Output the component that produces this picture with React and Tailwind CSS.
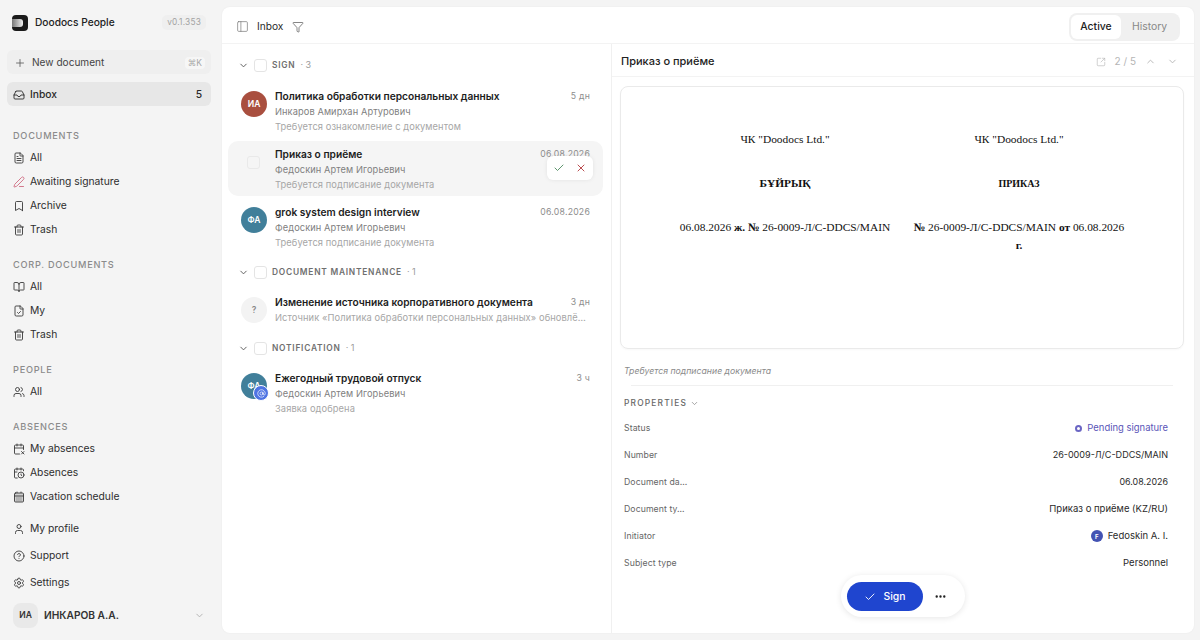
import {
  Plus, Inbox, FileText, PenLine, Bookmark, Trash2, BookOpen, FileCheck, Users, CalendarX2, CalendarClock,
  CalendarDays, User, CircleHelp, Settings, ChevronDown, ChevronUp, PanelLeft, Filter, SquareArrowOutUpRight,
  Check, X, Ellipsis, AtSign,
} from "lucide-react";

function NavItem({ icon: Icon, label, iconClass = "text-[#3a3a3a]" }) {
  return (
    <div className="flex h-6 items-center gap-[5px] pl-[13px] pt-[2px] text-[10.3px] text-[#2e2e2e]">
      <Icon size={12} strokeWidth={1.8} className={iconClass} />
      <span>{label}</span>
    </div>
  );
}

function NavSection({ title, children, className = "" }) {
  return (
    <div className={className}>
      <div className="mb-[2px] flex h-[16px] items-center pl-[13px] pt-[2px] text-[9.2px] font-medium tracking-[0.08em] text-[#8b8b8b]">
        {title}
      </div>
      {children}
    </div>
  );
}

function Sidebar() {
  return (
    <aside className="flex h-full w-[222px] shrink-0 flex-col">
      <div className="flex h-[44px] items-center pl-[12px] pr-[16px] pt-[1px]">
        <div className="relative h-4 w-4 overflow-hidden rounded-[4px] bg-[#1a1a1a]">
          <div className="absolute left-0 top-[4px] h-[8px] w-[11px] rounded-r-[3px] bg-gradient-to-r from-[#777] to-[#f2f2f2]" />
        </div>
        <span className="ml-[7px] text-[10.2px] font-medium text-[#222]">Doodocs People</span>
        <span className="ml-auto rounded-[5px] bg-[#efefef] px-[5px] py-[1px] text-[8.3px] tracking-wide text-[#a3a3a3]">v0.1.353</span>
      </div>
      <div className="ml-[7px] mr-[11px] mt-[6px] flex h-6 items-center rounded-md bg-[#efefef] pl-[7px] pr-[6px] pt-[2px] text-[10.1px] text-[#444]">
        <Plus size={12} strokeWidth={1.6} className="text-[#555]" />
        <span className="ml-[6px]">New document</span>
        <span className="ml-auto rounded bg-[#f6f6f6] px-[3px] text-[8.5px] text-[#a8a8a8]">⌘K</span>
      </div>
      <div className="ml-[7px] mr-[11px] mt-2 flex h-6 items-center rounded-md bg-[#e7e7e7] pl-[6px] pr-[9px] pt-[2px] text-[10.3px] font-medium text-[#2a2a2a]">
        <Inbox size={12} strokeWidth={1.8} />
        <span className="ml-[5px]">Inbox</span>
        <span className="ml-auto">5</span>
      </div>
      <NavSection title="DOCUMENTS" className="mt-[21px]">
        <NavItem icon={FileText} label="All" />
        <NavItem icon={PenLine} label="Awaiting signature" iconClass="text-[#cf6a80]" />
        <NavItem icon={Bookmark} label="Archive" />
        <NavItem icon={Trash2} label="Trash" />
      </NavSection>
      <NavSection title="CORP. DOCUMENTS" className="mt-[15px]">
        <NavItem icon={BookOpen} label="All" />
        <NavItem icon={FileCheck} label="My" />
        <NavItem icon={Trash2} label="Trash" />
      </NavSection>
      <NavSection title="PEOPLE" className="mt-[15px]">
        <NavItem icon={Users} label="All" />
      </NavSection>
      <NavSection title="ABSENCES" className="mt-[15px]">
        <NavItem icon={CalendarX2} label="My absences" />
        <NavItem icon={CalendarClock} label="Absences" />
        <NavItem icon={CalendarDays} label="Vacation schedule" iconClass="fill-[#cfcfcf] text-[#3a3a3a]" />
      </NavSection>
      <div className="mt-[8px] flex flex-col gap-[3px]">
        <NavItem icon={User} label="My profile" />
        <NavItem icon={CircleHelp} label="Support" />
        <NavItem icon={Settings} label="Settings" />
      </div>
      <div className="mt-[9px] flex items-center pl-[13px] pr-[17px]">
        <div className="flex h-[25px] w-[25px] items-center justify-center rounded-lg bg-[#e9e9e9] text-[8.5px] font-semibold text-[#333]">ИА</div>
        <span className="ml-[6px] text-[10.2px] font-semibold text-[#333]">ИНКАРОВ А.А.</span>
        <ChevronDown size={11} className="ml-auto text-[#b0b0b0]" />
      </div>
    </aside>
  );
}

function GroupHeader({ title, count }) {
  return (
    <div className="flex h-[28px] items-center pl-[16px]">
      <ChevronDown size={11} strokeWidth={2} className="text-[#555]" />
      <div className="ml-[5px] h-[13px] w-[13px] rounded-[3px] border border-[#e4e4e4] bg-white" />
      <span className="ml-[5px] text-[8.4px] font-semibold tracking-[0.09em] text-[#6f6f6f]">{title}</span>
      <span className="ml-[5px] text-[9px] text-[#9a9a9a]">· {count}</span>
    </div>
  );
}

function Row({ avatar, avatarClass, title, person, note, time, selected, badge, noPerson }) {
  return (
    <div className={`relative ml-[6px] mr-[8px] flex h-[55px] rounded-[10px] pl-[13px] pr-[13px] pt-[6px] ${selected ? "bg-[#f5f5f5]" : ""}`}>
      <div className="relative mr-[8px] mt-[2px] h-[26px] w-[26px] shrink-0">
        {selected ? (
          <div className="ml-[6px] mt-[7px] h-[13px] w-[13px] rounded-[3px] border border-[#e9e9e9]" />
        ) : (
          <div className={`flex h-[26px] w-[26px] items-center justify-center rounded-full text-[8.5px] font-semibold ${avatarClass}`}>{avatar}</div>
        )}
        {badge && (
          <div className="absolute left-[12px] top-[12px] flex h-[16px] w-[16px] items-center justify-center rounded-full border border-white bg-[#4f74e3] text-white">
            <AtSign size={9} strokeWidth={1.8} />
          </div>
        )}
      </div>
      <div className="min-w-0 flex-1">
        <div className="flex items-center justify-between">
          <span className="text-[10.2px] font-semibold leading-[15px] text-[#1d1d1d]">{title}</span>
          <span className="text-[8.7px] tracking-wide text-[#8d8d8d]">{time}</span>
        </div>
        {noPerson ? null : <div className="text-[9.25px] leading-[15px] tracking-[0.01em] text-[#808080]">{person}</div>}
        <div className="text-[9.3px] leading-[15px] tracking-[0.01em] text-[#a6a6a6]">{note}</div>
      </div>
      {selected && (
        <div className="absolute right-[10px] top-[15px] flex h-6 w-[46px] items-center justify-center gap-[10px] rounded-md bg-white shadow-[0_0_4px_rgba(0,0,0,0.08)]">
          <Check size={12} strokeWidth={1.8} className="text-[#4d8a5f]" />
          <X size={12} strokeWidth={1.8} className="text-[#b2393c]" />
        </div>
      )}
    </div>
  );
}

function InboxList() {
  return (
    <div className="w-[390px] shrink-0 border-r border-[#f0f0f0] pt-[7px]">
      <GroupHeader title="SIGN" count="3" />
      <div className="mt-[4px] flex flex-col gap-[3px]">
        <Row avatar="ИА" avatarClass="bg-[#a94f3f] text-white" title="Политика обработки персональных данных" person="Инкаров Амирхан Артурович" note="Требуется ознакомление с документом" time="5 дн" />
        <Row selected title="Приказ о приёме" person="Федоскин Артем Игорьевич" note="Требуется подписание документа" time="06.08.2026" />
        <Row avatar="ФА" avatarClass="bg-[#417f9a] text-white" title="grok system design interview" person="Федоскин Артем Игорьевич" note="Требуется подписание документа" time="06.08.2026" />
      </div>
      <div className="mt-[4px]"><GroupHeader title="DOCUMENT MAINTENANCE" count="1" /></div>
      <div className="mt-[3px]">
        <Row noPerson avatar="?" avatarClass="bg-[#f3f3f3] text-[#8a8a8a]" title="Изменение источника корпоративного документа" note="Источник «Политика обработки персональных данных» обновлё…" time="3 дн" />
      </div>
      <div className="-mt-[10px]"><GroupHeader title="NOTIFICATION" count="1" /></div>
      <div className="mt-[3px]">
        <Row avatar="ФА" avatarClass="bg-[#417f9a] text-white" badge title="Ежегодный трудовой отпуск" person="Федоскин Артем Игорьевич" note="Заявка одобрена" time="3 ч" />
      </div>
    </div>
  );
}

function Prop({ label, children }) {
  return (
    <div className="flex h-[27px] items-center justify-between text-[8.7px]">
      <span className="tracking-[0.01em] text-[#666]">{label}</span>
      <div className="flex items-center text-[9.5px] text-[#2a2a2a]">{children}</div>
    </div>
  );
}

function Preview() {
  return (
    <div className="relative min-w-0 flex-1">
      <div className="flex h-[33px] items-center border-b border-[#f3f3f3] pl-[9px] pr-[16px] pt-[3px]">
        <span className="text-[11px] font-medium text-[#222]">Приказ о приёме</span>
        <div className="ml-auto flex items-center text-[10px] text-[#b5b5b5]">
          <SquareArrowOutUpRight size={10} strokeWidth={1.5} />
          <span className="ml-[9px]">2 / 5</span>
          <ChevronUp size={11} className="ml-[9px]" />
          <ChevronDown size={11} className="ml-[11px]" />
        </div>
      </div>
      <div className="ml-[8px] mr-[10px] mt-[9px] h-[263px] rounded-lg border border-[#eaeaea] font-['Liberation_Serif',serif] text-[11.4px] leading-[14px] text-[#111] shadow-[0_1px_2px_rgba(0,0,0,0.03)]">
        <div className="grid grid-cols-[1fr_1fr] px-[47px] pt-[45px] text-center">
          <div className="px-[10px]">
            <div>ЧК "Doodocs Ltd."</div>
            <div className="mt-[30px] font-bold">БҰЙРЫҚ</div>
            <div className="mt-[30px] whitespace-nowrap">06.08.2026 <b>ж. №</b> 26-0009-Л/С-DDCS/MAIN</div>
          </div>
          <div className="px-[10px]">
            <div>ЧК "Doodocs Ltd."</div>
            <div className="mt-[31px] text-[10px] font-bold">ПРИКАЗ</div>
            <div className="mt-[27px] leading-[18px]"><b>№</b> 26-0009-Л/С-DDCS/MAIN <b>от</b> 06.08.2026 <b>г.</b></div>
          </div>
        </div>
      </div>
      <div className="ml-[12px] mt-[16px] text-[8.7px] italic text-[#8a8a8a]">
        Требуется подписание документа
      </div>
      <div className="ml-[19px] mr-[21px] mt-[7px] border-b border-[#f0f0f0]" />
      <div className="mt-[11px] flex items-center pl-[12px] text-[8.4px] font-medium tracking-[0.14em] text-[#666]">
        PROPERTIES
        <ChevronDown size={9} className="ml-[3px] text-[#888]" />
      </div>
      <div className="mt-[5px] pl-[12px] pr-[26px]">
        <Prop label="Status">
          <span className="flex items-center text-[9.45px] text-[#5a55b8]">
            <span className="mr-[5px] h-[7px] w-[7px] rounded-full border-2 border-[#6b66c4]" />
            Pending signature
          </span>
        </Prop>
        <Prop label="Number"><span className="text-[9.05px]">26-0009-Л/С-DDCS/MAIN</span></Prop>
        <Prop label="Document da…"><span className="text-[8.9px]">06.08.2026</span></Prop>
        <Prop label="Document ty…">Приказ о приёме (KZ/RU)</Prop>
        <Prop label="Initiator">
          <span className="mr-[5px] flex h-3 w-3 items-center justify-center rounded-full bg-[#4353b3] text-[6px] font-bold text-white">F</span>
          <span>Fedoskin A. I.</span>
        </Prop>
        <Prop label="Subject type">Personnel</Prop>
      </div>
      <div className="absolute bottom-[16px] left-[229px] flex h-[42px] items-center rounded-full bg-white pl-[6px] pr-[18px] shadow-[0_1px_6px_rgba(0,0,0,0.1)]">
        <div className="flex h-[29px] w-[76px] items-center justify-center gap-[7px] rounded-full bg-[#1f45cf] pt-[1px] text-[10.4px] font-medium text-white">
          <Check size={12} strokeWidth={1.8} />
          Sign
        </div>
        <Ellipsis size={13} strokeWidth={2.4} className="ml-[11px] text-[#222]" />
      </div>
    </div>
  );
}

export default function App() {
  return (
    <div className="flex h-[640px] w-[1200px] overflow-hidden bg-[#f4f4f4] font-['Inter',sans-serif]">
      <Sidebar />
      <main className="mb-[7px] mr-[6px] mt-[7px] flex min-w-0 flex-1 flex-col rounded-lg bg-white shadow-[0_0_2px_rgba(0,0,0,0.05)]">
        <header className="flex h-[37px] shrink-0 items-center border-b border-[#f3f3f3] pl-[14px] pr-[14px] pt-[3px]">
          <PanelLeft size={13} strokeWidth={1.3} className="text-[#777]" />
          <span className="ml-[8px] text-[10.2px] text-[#2a2a2a]">Inbox</span>
          <Filter size={12} strokeWidth={1.3} className="ml-[9px] text-[#444]" />
          <div className="ml-auto flex h-[28px] items-center rounded-lg bg-[#f0f0f0] p-[2px] text-[10.4px]">
            <div className="flex h-[24px] w-[50px] items-center justify-center rounded-md bg-white font-medium text-[#222]">Active</div>
            <div className="flex w-[57px] justify-center text-[#888]">History</div>
          </div>
        </header>
        <div className="flex min-h-0 flex-1">
          <InboxList />
          <Preview />
        </div>
      </main>
    </div>
  );
}
